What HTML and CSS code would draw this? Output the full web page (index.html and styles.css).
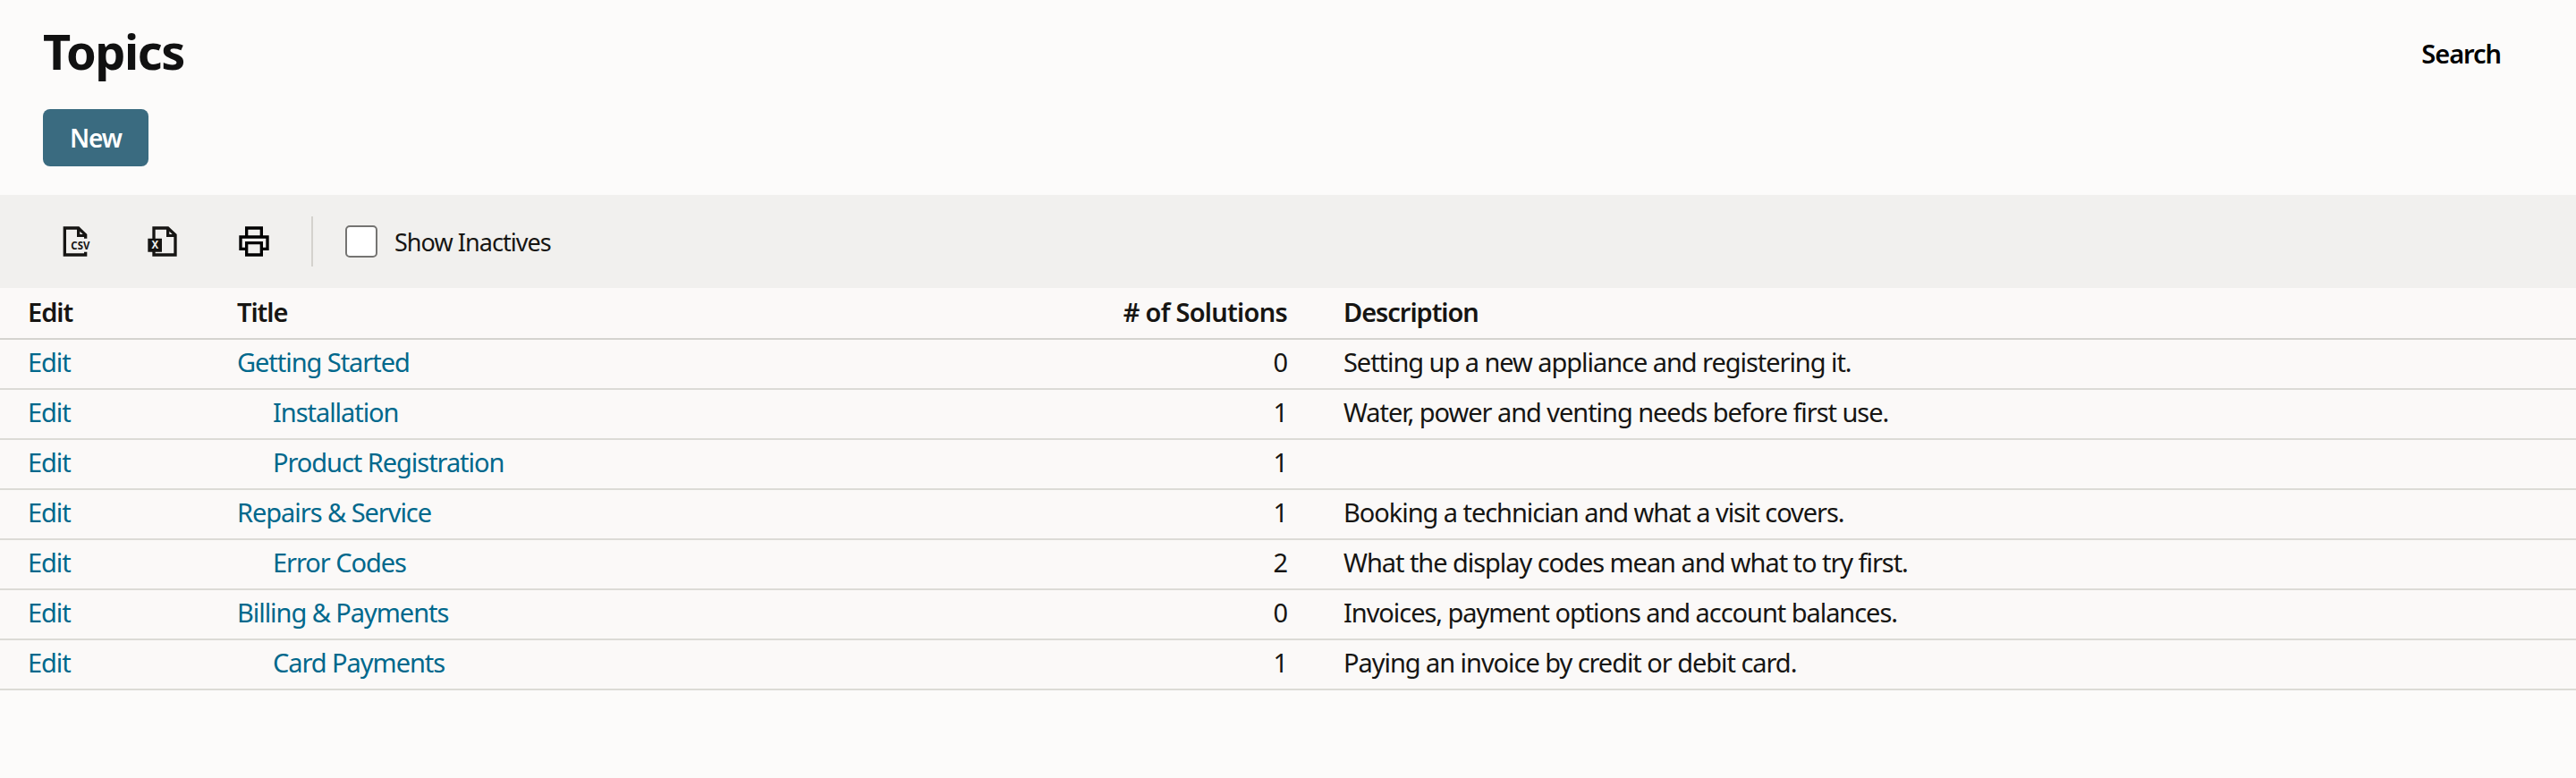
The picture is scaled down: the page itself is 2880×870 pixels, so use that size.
FILE: index.html
```html
<!DOCTYPE html>
<html lang="en">
<head>
    <meta charset="UTF-8">
    <meta name="viewport" content="width=device-width, initial-scale=1.0">
    <title>Topics</title>
    <link rel="stylesheet" href="styles.css">
</head>
<body>
    <header class="page-header">
        <h1>Topics</h1>
        <a href="#" class="search-link">Search</a>
    </header>
    <div class="actions">
        <button class="new-btn" type="button">New</button>
    </div>
    <div class="toolbar">
        <button class="icon-btn csv-btn" type="button" aria-label="Export CSV">
            <svg viewBox="0 0 24 24">
                <path fill-rule="evenodd" d="M4 2H14.6L20 7.2V10H18V9H13.2V4H6V20H18V19H20V22H4ZM15.2 5.2V7.2H17.2Z"/>
                <text x="9.2" y="17.2" font-size="7.2" textLength="12.6" lengthAdjust="spacingAndGlyphs">CSV</text>
            </svg>
        </button>
        <button class="icon-btn excel-btn" type="button" aria-label="Export Excel">
            <svg viewBox="0 0 24 24">
                <path fill-rule="evenodd" d="M5 2H15.8L21.4 7.2V22H5V19H2V10H5ZM7 4V10H11.4V19H7V20H19.4V9H14.4V4ZM16.4 5.2V7.2H18.4Z"/>
                <text class="x-mark" x="4.5" y="17" font-size="7" textLength="4.6" lengthAdjust="spacingAndGlyphs">X</text>
            </svg>
        </button>
        <button class="icon-btn print-btn" type="button" aria-label="Print">
            <svg viewBox="0 0 24 24">
                <path fill-rule="evenodd" d="M6 2H18V8H22V18H18V22H6V18H2V8H6ZM8 4V8H16V4ZM4 10V16H6V12H18V16H20V10ZM8 14V20H16V14Z"/>
            </svg>
        </button>
        <span class="divider"></span>
        <label class="inactives">
            <input type="checkbox">
            <span>Show Inactives</span>
        </label>
    </div>
    <table class="topics">
        <thead>
            <tr>
                <th class="col-edit">Edit</th>
                <th class="col-title">Title</th>
                <th class="col-count">&#35; of Solutions</th>
                <th class="col-desc">Description</th>
            </tr>
        </thead>
        <tbody>
            <tr>
                <td><a href="#">Edit</a></td>
                <td><a href="#">Getting Started</a></td>
                <td class="col-count">0</td>
                <td class="col-desc">Setting up a new appliance and registering it.</td>
            </tr>
            <tr>
                <td><a href="#">Edit</a></td>
                <td class="sub"><a href="#">Installation</a></td>
                <td class="col-count">1</td>
                <td class="col-desc">Water, power and venting needs before first use.</td>
            </tr>
            <tr>
                <td><a href="#">Edit</a></td>
                <td class="sub"><a href="#">Product Registration</a></td>
                <td class="col-count">1</td>
                <td class="col-desc"></td>
            </tr>
            <tr>
                <td><a href="#">Edit</a></td>
                <td><a href="#">Repairs &amp; Service</a></td>
                <td class="col-count">1</td>
                <td class="col-desc">Booking a technician and what a visit covers.</td>
            </tr>
            <tr>
                <td><a href="#">Edit</a></td>
                <td class="sub"><a href="#">Error Codes</a></td>
                <td class="col-count">2</td>
                <td class="col-desc">What the display codes mean and what to try first.</td>
            </tr>
            <tr>
                <td><a href="#">Edit</a></td>
                <td><a href="#">Billing &amp; Payments</a></td>
                <td class="col-count">0</td>
                <td class="col-desc">Invoices, payment options and account balances.</td>
            </tr>
            <tr>
                <td><a href="#">Edit</a></td>
                <td class="sub"><a href="#">Card Payments</a></td>
                <td class="col-count">1</td>
                <td class="col-desc">Paying an invoice by credit or debit card.</td>
            </tr>
        </tbody>
    </table>
</body>
</html>
```
FILE: styles.css
```css
* {
    box-sizing: border-box;
}

body {
    margin: 0;
    font-family: "Noto Sans", "Open Sans", sans-serif;
    font-size: 29px;
    letter-spacing: -1.05px;
    color: #161513;
    background-color: #fcfbfa;
}

a {
    color: #00688c;
    text-decoration: none;
}

button {
    font-family: inherit;
    letter-spacing: inherit;
    border: none;
    cursor: pointer;
}

.page-header {
    display: flex;
    align-items: center;
    justify-content: space-between;
    height: 122px;
    padding: 0 84px 4px 48px;
}

h1 {
    margin: 0 0 4px;
    font-size: 54px;
    font-weight: 700;
    line-height: 72px;
    letter-spacing: -1.4px;
    color: #111;
}

.search-link {
    font-weight: 600;
    color: #000;
}

.actions {
    height: 96px;
    padding-left: 48px;
}

.new-btn {
    display: block;
    width: 118px;
    height: 64px;
    padding: 0 0 1px;
    font-size: 28px;
    font-weight: 600;
    color: #fff;
    background-color: #3a6b80;
    border-radius: 8px;
}

.toolbar {
    display: flex;
    align-items: center;
    height: 104px;
    padding-left: 64px;
    background-color: #f1f0ee;
}

.icon-btn {
    width: 40px;
    height: 40px;
    padding: 0;
    background: none;
    color: #161513;
}

.icon-btn svg {
    display: block;
    width: 40px;
    height: 40px;
    fill: currentColor;
}

.icon-btn text {
    font-weight: 700;
    letter-spacing: 0;
}

.icon-btn .x-mark {
    fill: #f1f0ee;
}

.excel-btn {
    margin-left: 58px;
}

.print-btn {
    margin-left: 62px;
    color: #000;
}

.divider {
    width: 2px;
    height: 56px;
    margin: 0 36px 0 44px;
    background-color: #d4d2cd;
}

.inactives {
    display: flex;
    align-items: center;
    gap: 19px;
    font-size: 27px;
    letter-spacing: -0.95px;
}

.inactives input {
    appearance: none;
    width: 36px;
    height: 36px;
    margin: 0;
    border: 2px solid #757472;
    border-radius: 5px;
    background-color: #fff;
}

.topics {
    width: 100%;
    table-layout: fixed;
    border-collapse: separate;
    border-spacing: 0;
    background-color: #fbf9f8;
}

.topics th,
.topics td {
    height: 56px;
    padding: 0 0 4px 31px;
    line-height: 38px;
    text-align: left;
    white-space: nowrap;
    border-bottom: 2px solid #dcdbd6;
}

.topics th {
    height: 58px;
    padding-bottom: 2px;
    font-weight: 600;
    border-bottom-color: #d4d3cf;
}

.topics td.sub {
    padding-left: 71px;
}

.topics .col-count {
    padding-right: 32px;
    text-align: right;
}

.topics th.col-count {
    letter-spacing: -0.75px;
}

.col-edit {
    width: 234px;
}

.col-title {
    width: 966px;
}

.col-count {
    width: 271px;
}
```
